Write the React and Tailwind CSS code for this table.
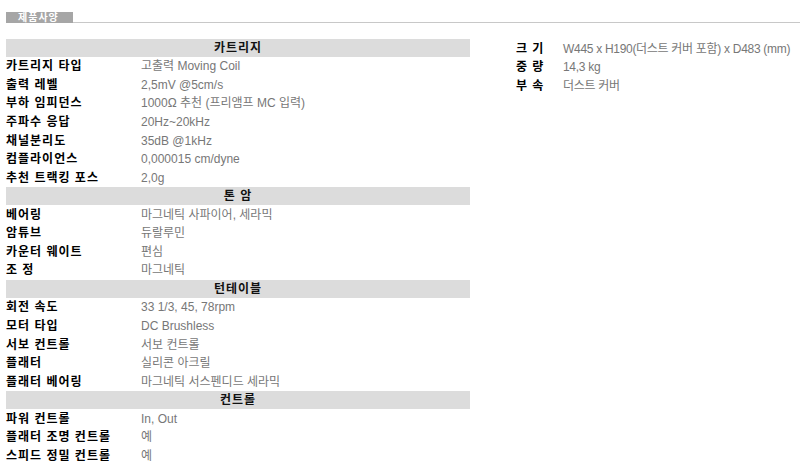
const sections = [
  {
    title: '카트리지',
    rows: [
      ['카트리지 타입', '고출력 Moving Coil'],
      ['출력 레벨', '2,5mV @5cm/s'],
      ['부하 임피던스', '1000Ω 추천 (프리앰프 MC 입력)'],
      ['주파수 응답', '20Hz~20kHz'],
      ['채널분리도', '35dB @1kHz'],
      ['컴플라이언스', '0,000015 cm/dyne'],
      ['추천 트랙킹 포스', '2,0g'],
    ],
  },
  {
    title: '톤 암',
    rows: [
      ['베어링', '마그네틱 사파이어, 세라믹'],
      ['암튜브', '듀랄루민'],
      ['카운터 웨이트', '편심'],
      ['조 정', '마그네틱'],
    ],
  },
  {
    title: '턴테이블',
    rows: [
      ['회전 속도', '33 1/3, 45, 78rpm'],
      ['모터 타입', 'DC Brushless'],
      ['서보 컨트롤', '서보 컨트롤'],
      ['플래터', '실리콘 아크릴'],
      ['플래터 베어링', '마그네틱 서스펜디드 세라믹'],
    ],
  },
  {
    title: '컨트롤',
    rows: [
      ['파워 컨트롤', 'In, Out'],
      ['플래터 조명 컨트롤', '예'],
      ['스피드 정밀 컨트롤', '예'],
    ],
  },
]

const extras = [
  ['크 기', 'W445 x H190(더스트 커버 포함) x D483 (mm)'],
  ['중 량', '14,3 kg'],
  ['부 속', '더스트 커버'],
]

export default function App() {
  return (
    <div className="w-[800px] h-[465px] bg-white overflow-hidden text-[12px] leading-none font-['Liberation_Sans','Noto_Sans_CJK_KR',sans-serif]">
      {/* tab title */}
      <div className="flex items-end pt-[12px] pl-[6px]">
        <div className="w-[67px] h-[11px] bg-[#a6a6a6] text-white text-[10px] font-bold flex items-center pl-[12px] tracking-[1px]">
          제품사양
        </div>
        <div className="flex-1 h-px bg-[#c8c8c8]" />
      </div>

      <div className="flex pt-[16px] pl-[6px]">
        {/* spec table */}
        <div className="w-[464px] flex flex-col gap-[1px]">
          {sections.map((s) => (
            <div key={s.title} className="flex flex-col gap-[1px]">
              <div className="h-[17.55px] bg-[#dcdcdc] flex items-center justify-center font-bold text-[#111] tracking-[1px]">
                {s.title}
              </div>
              {s.rows.map(([k, v]) => (
                <div key={k} className="h-[17.55px] flex items-center">
                  <div className="w-[135px] font-bold text-black tracking-[1px]">{k}</div>
                  <div className="text-[#777]">{v}</div>
                </div>
              ))}
            </div>
          ))}
        </div>

        {/* extra info */}
        <div className="ml-[46px] pt-[1px] flex flex-col gap-[1px]">
          {extras.map(([k, v]) => (
            <div key={k} className="h-[17.5px] flex items-center whitespace-nowrap">
              <div className="w-[47px] font-bold text-black tracking-[1px]">{k}</div>
              <div className="text-[#777] tracking-[-0.3px]">{v}</div>
            </div>
          ))}
        </div>
      </div>
    </div>
  )
}
